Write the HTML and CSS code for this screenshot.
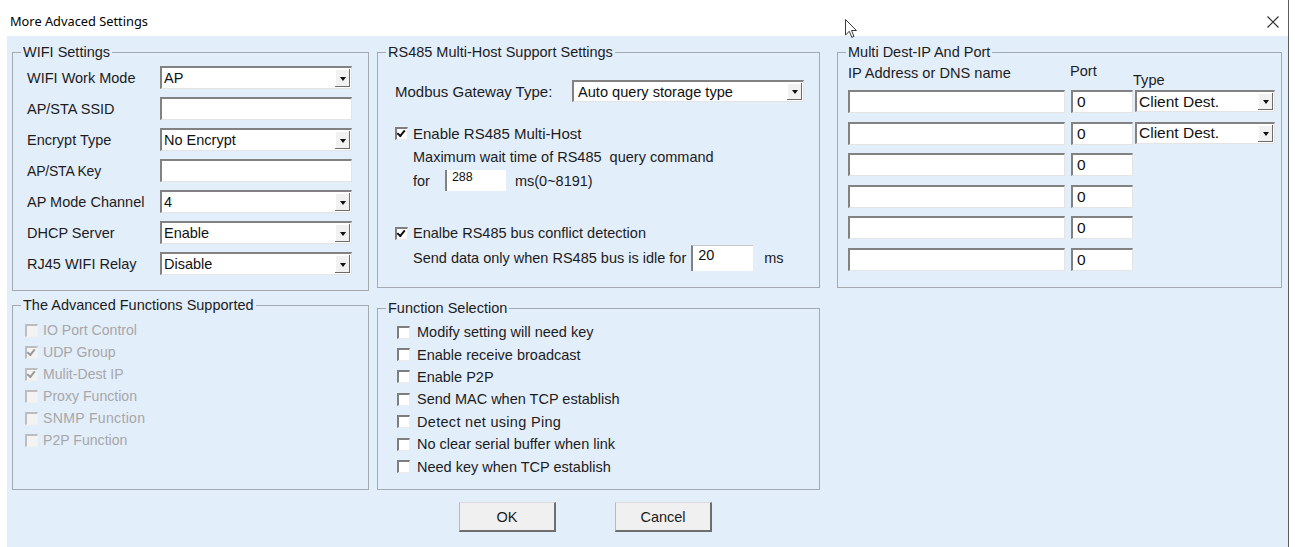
FILE: index.html
```html
<!DOCTYPE html>
<html lang="en">
<head>
<meta charset="utf-8">
<title>More Advaced Settings</title>
<link rel="stylesheet" href="styles.css">
</head>
<body>
<div class="window">
  <header class="titlebar">
    <span class="title">More Advaced Settings</span>
    <svg class="close" width="12" height="12" viewBox="0 0 12 12"><path d="M0.5 0.5 L11.5 11.5 M11.5 0.5 L0.5 11.5" stroke="#2b2b2b" stroke-width="1.1" fill="none"/></svg>
  </header>

  <main class="client">
    <!-- left column -->
    <div class="col col-left">
      <fieldset class="group wifi">
        <legend>WIFI Settings</legend>
        <div class="group-body">
          <div class="form-row"><span class="lbl">WIFI Work Mode</span><div class="field select"><span>AP</span><i class="drop"></i></div></div>
          <div class="form-row"><span class="lbl">AP/STA SSID</span><div class="field"></div></div>
          <div class="form-row"><span class="lbl">Encrypt Type</span><div class="field select"><span>No Encrypt</span><i class="drop"></i></div></div>
          <div class="form-row"><span class="lbl lbl-thin">AP/STA Key</span><div class="field"></div></div>
          <div class="form-row"><span class="lbl">AP Mode Channel</span><div class="field select"><span>4</span><i class="drop"></i></div></div>
          <div class="form-row"><span class="lbl">DHCP Server</span><div class="field select"><span>Enable</span><i class="drop"></i></div></div>
          <div class="form-row"><span class="lbl">RJ45 WIFI Relay</span><div class="field select"><span>Disable</span><i class="drop"></i></div></div>
        </div>
      </fieldset>

      <fieldset class="group adv">
        <legend>The Advanced Functions Supported</legend>
        <div class="group-body">
          <div class="check-item disabled"><i class="cb"></i><span>IO Port Control</span></div>
          <div class="check-item disabled"><i class="cb checked"></i><span>UDP Group</span></div>
          <div class="check-item disabled"><i class="cb checked"></i><span>Mulit-Dest IP</span></div>
          <div class="check-item disabled"><i class="cb"></i><span>Proxy Function</span></div>
          <div class="check-item disabled"><i class="cb"></i><span class="narrow">SNMP Function</span></div>
          <div class="check-item disabled"><i class="cb"></i><span>P2P Function</span></div>
        </div>
      </fieldset>
    </div>

    <!-- middle column -->
    <div class="col col-mid">
      <fieldset class="group rs485">
        <legend>RS485 Multi-Host Support Settings</legend>
        <div class="group-body">
          <div class="modbus-row">
            <span class="modbus-lbl">Modbus Gateway Type:</span>
            <div class="field select modbus-sel"><span>Auto query storage type</span><i class="drop"></i></div>
          </div>
          <div class="check-row first"><i class="cb checked"></i><span>Enable RS485 Multi-Host</span></div>
          <div class="indent wait-text">Maximum wait time of RS485&nbsp; query command</div>
          <div class="indent value-row">
            <span>for</span>
            <div class="field small-field wait-field"><span>288</span></div>
            <span>ms(0~8191)</span>
          </div>
          <div class="check-row second"><i class="cb checked"></i><span>Enalbe RS485 bus conflict detection</span></div>
          <div class="indent value-row idle-row">
            <span>Send data only when RS485 bus is idle for</span>
            <div class="field small-field idle-field"><span>20</span></div>
            <span>ms</span>
          </div>
        </div>
      </fieldset>

      <fieldset class="group funcs">
        <legend>Function Selection</legend>
        <div class="group-body">
          <div class="check-item"><i class="cb"></i><span>Modify setting will need key</span></div>
          <div class="check-item"><i class="cb"></i><span>Enable receive broadcast</span></div>
          <div class="check-item"><i class="cb"></i><span>Enable P2P</span></div>
          <div class="check-item"><i class="cb"></i><span>Send MAC when TCP establish</span></div>
          <div class="check-item"><i class="cb"></i><span class="narrow">Detect net using Ping</span></div>
          <div class="check-item"><i class="cb"></i><span>No clear serial buffer when link</span></div>
          <div class="check-item"><i class="cb"></i><span>Need key when TCP establish</span></div>
        </div>
      </fieldset>

      <div class="actions">
        <button class="btn" type="button">OK</button>
        <button class="btn" type="button">Cancel</button>
      </div>
    </div>

    <!-- right column -->
    <div class="col col-right">
      <fieldset class="group multi">
        <legend>Multi Dest-IP And Port</legend>
        <div class="group-body">
          <div class="dest-head">
            <span class="h-ip">IP Address or DNS name</span>
            <span class="h-port">Port</span>
            <span class="h-type">Type</span>
          </div>
          <div class="dest-row"><div class="field ip"></div><div class="field port"><span>0</span></div><div class="field select type"><span>Client Dest.</span><i class="drop"></i></div></div>
          <div class="dest-row"><div class="field ip"></div><div class="field port"><span>0</span></div><div class="field select type"><span>Client Dest.</span><i class="drop"></i></div></div>
          <div class="dest-row"><div class="field ip"></div><div class="field port"><span>0</span></div></div>
          <div class="dest-row"><div class="field ip"></div><div class="field port"><span>0</span></div></div>
          <div class="dest-row"><div class="field ip"></div><div class="field port"><span>0</span></div></div>
          <div class="dest-row"><div class="field ip"></div><div class="field port"><span>0</span></div></div>
        </div>
      </fieldset>
    </div>
  </main>

  <!-- mouse pointer resting over the dialog -->
  <svg class="cursor" width="13" height="20" viewBox="0 0 13 20">
    <path d="M0.5 0.5 L0.5 16 L4.3 12.3 L6.8 18.3 L9 17.4 L6.5 11.5 L11.5 11.5 Z" fill="#fff" stroke="#3a3a3a" stroke-width="1" stroke-linejoin="miter"/>
  </svg>
</div>
</body>
</html>
```

FILE: styles.css
```css
html, body {
  margin: 0;
  background: #ffffff;
}

body {
  font-family: "Liberation Sans", Arial, sans-serif;
  color: #1c1c1c;
}

.window {
  position: relative;
  width: 1289px;
  height: 547px;
  box-sizing: border-box;
  border-right: 1px solid #5c5c5c;
  overflow: hidden;
}

/* title bar */
.titlebar {
  height: 36px;
  display: flex;
  align-items: center;
  justify-content: space-between;
  padding: 5px 9px 0 10px;
  box-sizing: border-box;
}

.title {
  font-family: "Noto Sans", "Liberation Sans", sans-serif;
  font-size: 12.8px;
  color: #000;
}

.close {
  display: block;
  margin-top: 3px;
}

/* dialog client area */
.client {
  margin-left: 7px;
  height: 511px;
  box-sizing: border-box;
  background: #e3eefb;
  display: flex;
  padding: 8px 0 0 5px;
}

.col {
  display: flex;
  flex-direction: column;
}

.col-left { width: 357px; }
.col-mid { width: 443px; margin-left: 8px; }
.col-right { width: 445px; margin-left: 17px; }

/* group boxes */
.group {
  margin: 0;
  padding: 0;
  min-width: 0;
  box-sizing: border-box;
  border: 1px solid #a5aaaf;
}

.group legend {
  margin-left: 8px;
  padding: 0 2px;
  font-size: 14.5px;
  line-height: 16px;
  color: #1c1c1c;
}

/* sunken text fields */
.field {
  height: 23px;
  box-sizing: border-box;
  background: #fff;
  border-style: solid;
  border-width: 2px 1px 1px 2px;
  border-color: #828282 #e4e4e4 #e4e4e4 #828282;
  display: flex;
  align-items: center;
  padding-left: 2px;
  font-size: 14.5px;
  color: #111;
}

.select .drop {
  align-self: stretch;
  width: 15px;
  margin: 1px 1px 1px auto;
  background: #f1f1f1;
  box-shadow: inset -1px -1px 0 #6c6c6c, inset 1px 1px 0 #ffffff;
  display: flex;
  align-items: center;
  justify-content: center;
}

.select .drop::after {
  content: "";
  border-top: 4px solid #111;
  border-left: 3.5px solid transparent;
  border-right: 3.5px solid transparent;
  margin-top: 1px;
}

/* checkboxes */
.cb {
  flex: none;
  width: 13px;
  height: 13px;
  box-sizing: border-box;
  background: #fff;
  border-style: solid;
  border-width: 2px 1px 1px 2px;
  border-color: #7e7e7e #ececec #ececec #7e7e7e;
  position: relative;
}

.cb.checked::after {
  content: "";
  position: absolute;
  left: 2px;
  top: 0px;
  width: 3px;
  height: 6px;
  border-right: 2px solid #111;
  border-bottom: 2px solid #111;
  transform: rotate(40deg);
  transform-origin: 60% 40%;
}

/* WIFI settings */
.wifi {
  height: 247px;
}

.wifi .group-body {
  padding: 6px 0 0 14px;
}

.form-row {
  display: flex;
  align-items: center;
  height: 23px;
  margin-bottom: 8px;
}

.form-row .lbl {
  width: 133px;
  font-size: 14.5px;
}

.form-row .lbl-thin {
  font-size: 14px;
  letter-spacing: -0.2px;
}

.wifi .field {
  width: 192px;
}

/* advanced functions (read-only) */
.adv {
  height: 193px;
  margin-top: 6px;
}

.adv .group-body {
  padding: 6px 0 0 12px;
}

.check-item {
  display: flex;
  align-items: center;
  gap: 5px;
  height: 22px;
  font-size: 14.1px;
}

.check-item.disabled {
  color: #a7a7a7;
}

.check-item.disabled .cb {
  background: #f3f3f3;
  border-color: #bdbdbd #f0f0f0 #f0f0f0 #bdbdbd;
}

.check-item.disabled .cb.checked::after {
  border-color: #9a9a9a;
}

.narrow {
  letter-spacing: 0.3px;
}

/* RS485 settings */
.rs485 {
  height: 244px;
  font-size: 14.5px;
}

.rs485 .group-body {
  padding: 20px 0 0 17px;
}

.modbus-row {
  display: flex;
  align-items: center;
  height: 22px;
}

.modbus-lbl {
  width: 177px;
  font-size: 15px;
}

.modbus-sel {
  width: 232px;
  height: 22px;
  font-size: 14.6px;
  padding-left: 4px;
}

.check-row {
  display: flex;
  align-items: center;
  gap: 5px;
  height: 18px;
}

.check-row.first { margin-top: 22px; font-size: 15px; }
.check-row.second { margin-top: 33px; }

.indent {
  padding-left: 18px;
}

.wait-text {
  height: 18px;
  line-height: 18px;
  margin-top: 6px;
}

.value-row {
  display: flex;
  align-items: center;
  margin-top: 4px;
}

.small-field {
  border-width: 0 0 0 2px;
  border-color: #828282;
  align-items: flex-start;
  padding-left: 5px;
}

.wait-field {
  width: 61px;
  height: 21px;
  margin: 0 9px 0 15px;
  font-size: 12.5px;
  line-height: 14px;
}

.idle-row {
  margin-top: 3px;
}

.idle-field {
  width: 62px;
  height: 26px;
  margin: 0 11px 0 5px;
  border-width: 1px 0 0 2px;
  border-color: #c8c8c8 #828282 #828282 #828282;
  font-size: 14.5px;
  line-height: 16px;
  padding-top: 1px;
}

/* function selection */
.funcs {
  height: 190px;
  margin-top: 12px;
}

.funcs .group-body {
  padding: 5px 0 0 19px;
}

.funcs .check-item {
  gap: 7px;
  height: 22.4px;
  font-size: 14.5px;
}

/* buttons */
.actions {
  display: flex;
  gap: 59px;
  padding-left: 82px;
  margin-top: 12px;
}

.btn {
  width: 97px;
  height: 30px;
  box-sizing: border-box;
  background: #f0f0f0;
  border-style: solid;
  border-width: 1px 2px 2px 1px;
  border-color: #dcdcdc #6e6e6e #6e6e6e #b9b9b9;
  font-family: "Liberation Sans", Arial, sans-serif;
  font-size: 14.5px;
  color: #1c1c1c;
  padding: 0;
}

/* multi destination table */
.multi {
  height: 244px;
}

.multi .group-body {
  padding-left: 10px;
}

.dest-head {
  display: flex;
  height: 30px;
  font-size: 14.6px;
  line-height: 16px;
}

.h-ip { width: 222px; padding-top: 5px; }
.h-port { width: 63px; padding-top: 3px; }
.h-type { padding-top: 12px; }

.dest-row {
  display: flex;
  margin-bottom: 8.6px;
}

.dest-row .field {
  height: 23px;
  font-size: 15.5px;
}

.dest-row .ip { width: 217px; }
.dest-row .port { width: 62px; margin-left: 6px; padding-left: 4px; }
.dest-row .type { width: 140px; margin-left: 2px; height: 22px; }

/* pointer */
.cursor {
  position: absolute;
  left: 845px;
  top: 19px;
}
```
